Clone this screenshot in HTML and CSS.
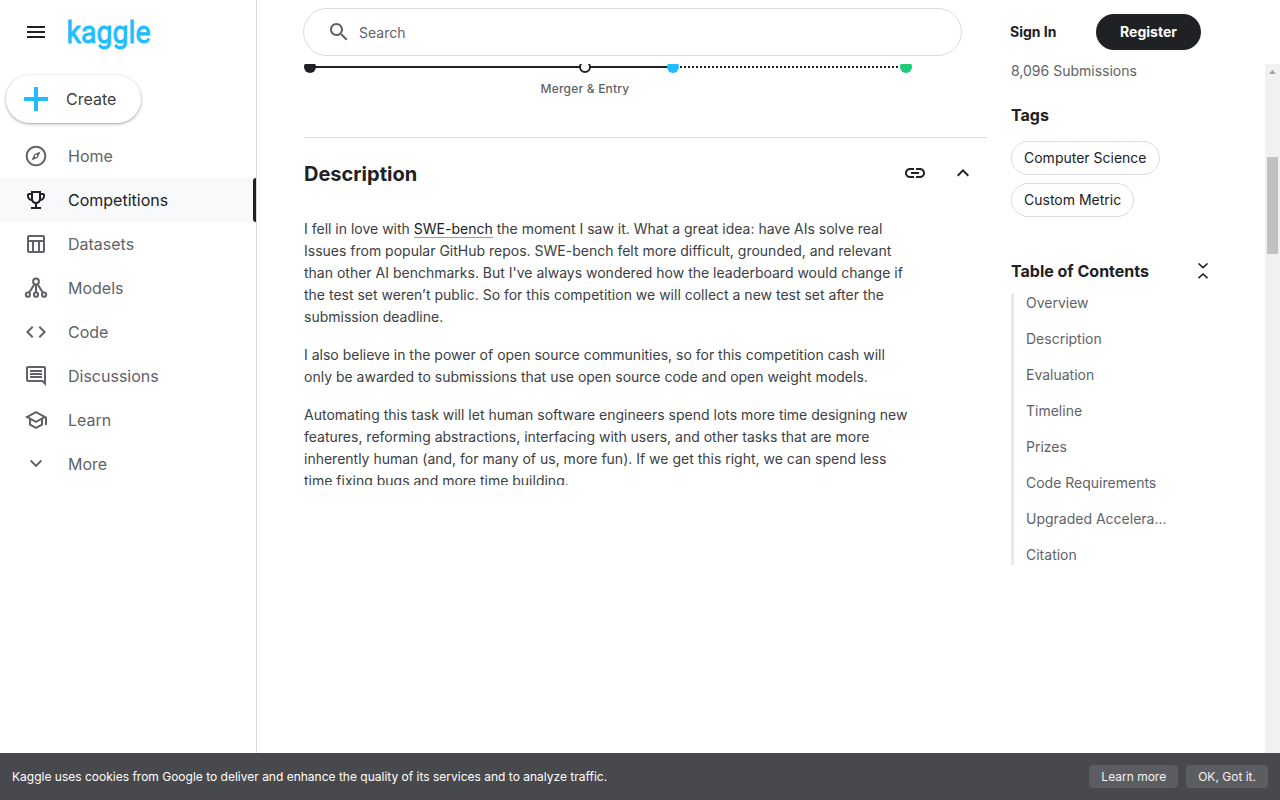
FILE: index.html
```html
<!DOCTYPE html>
<html lang="en">
<head>
<meta charset="utf-8">
<title>Kaggle Competition</title>
<link rel="stylesheet" href="styles.css">
</head>
<body>
<div class="app">
  <aside class="sidebar">
    <div class="brand">
      <svg class="icon" viewBox="0 0 24 24"><path d="M3 18h18v-2H3v2zm0-5h18v-2H3v2zm0-7v2h18V6H3z"/></svg>
      <svg class="logo" viewBox="0 0 86 40"><text x="-.5" y="30.500" textLength="84" lengthAdjust="spacingAndGlyphs">kaggle</text></svg>
    </div>
    <button class="create">
      <svg viewBox="0 0 24 24"><path d="M10 0h4v10h10v4H14v10h-4V14H0v-4h10z"/></svg>
      <span>Create</span>
    </button>
    <nav class="nav">
      <a class="nav-item"><svg class="icon" viewBox="0 0 24 24"><path fill-rule="evenodd" d="M12 1.700C6.300 1.700 1.700 6.300 1.700 12S6.300 22.300 12 22.300 22.300 17.700 22.300 12 17.700 1.700 12 1.700zM12 20.300c-4.580 0-8.300-3.720-8.300-8.300S7.420 3.700 12 3.700s8.300 3.720 8.300 8.300-3.720 8.300-8.300 8.300zM7.500 16.500l6.300-2.700 2.700-6.300-6.300 2.700-2.700 6.300zM12 10.800c.66 0 1.200.54 1.200 1.200s-.54 1.200-1.200 1.200-1.200-.54-1.200-1.200.54-1.200 1.200-1.200z"/></svg>Home</a>
      <a class="nav-item active"><svg class="icon" viewBox="0 0 24 24"><path d="M19 5h-2V3H7v2H5c-1.100 0-2 .9-2 2v1c0 2.550 1.920 4.630 4.390 4.940.63 1.500 1.980 2.630 3.610 2.960V19H7v2h10v-2h-4v-3.100c1.630-.33 2.980-1.460 3.610-2.960C19.080 12.630 21 10.550 21 8V7c0-1.100-.9-2-2-2zM5 8V7h2v3.820C5.840 10.400 5 9.300 5 8zm7 6c-1.650 0-3-1.350-3-3V5h6v6c0 1.650-1.350 3-3 3zm7-6c0 1.300-.84 2.400-2 2.820V7h2v1z"/></svg>Competitions</a>
      <a class="nav-item"><svg class="icon" viewBox="0 0 24 24"><path d="M19 3H5c-1.100 0-2 .9-2 2v14c0 1.100.9 2 2 2h14c1.100 0 2-.9 2-2V5c0-1.100-.9-2-2-2zm0 2v3H5V5h14zm-5 5v9h-4v-9h4zM5 10h3v9H5v-9zm11 9v-9h3v9h-3z"/></svg>Datasets</a>
      <a class="nav-item"><svg class="icon line" viewBox="0 0 24 24"><circle cx="12" cy="5.500" r="2.900"/><circle cx="3.900" cy="18.700" r="2.100"/><circle cx="12" cy="18.700" r="2.100"/><circle cx="20.100" cy="18.700" r="2.100"/><path d="M10.600 8 5 16.900M12 8.400v8.200M13.400 8l5.600 8.900"/></svg>Models</a>
      <a class="nav-item"><svg class="icon" viewBox="0 0 24 24"><path d="M9.400 16.600 4.800 12l4.600-4.600L8 6l-6 6 6 6 1.400-1.400zm5.200 0 4.600-4.600-4.600-4.600L16 6l6 6-6 6-1.400-1.400z"/></svg>Code</a>
      <a class="nav-item"><svg class="icon" viewBox="0 0 24 24"><path d="M21.990 4c0-1.100-.89-2-1.990-2H4c-1.100 0-2 .9-2 2v12c0 1.100.9 2 2 2h14l4 4-.01-18zM20 4v13.170L18.830 16H4V4h16zM6 12h12v2H6zm0-3h12v2H6zm0-3h12v2H6z"/></svg>Discussions</a>
      <a class="nav-item"><svg class="icon" viewBox="0 0 24 24"><path d="M12 3 1 9l4 2.180v6L12 21l7-3.820v-6l2-1.090V17h2V9L12 3zm6.820 6L12 12.720 5.180 9 12 5.280 18.820 9zM17 15.990l-5 2.730-5-2.730v-3.720L12 15l5-2.730v3.720z"/></svg>Learn</a>
      <a class="nav-item"><svg class="icon" viewBox="0 0 24 24"><path d="M7.410 7.840 12 12.420l4.590-4.580L18 9.250l-6 6-6-6z"/></svg>More</a>
    </nav>
  </aside>

  <div class="page">
    <header class="topbar">
      <div class="search">
        <svg class="icon" viewBox="0 0 24 24"><path d="M15.500 14h-.79l-.28-.27C15.410 12.590 16 11.110 16 9.500 16 5.910 13.090 3 9.500 3S3 5.910 3 9.500 5.910 16 9.500 16c1.610 0 3.090-.59 4.230-1.570l.27.28v.79l5 4.990L20.490 19l-4.990-5zm-6 0C7.010 14 5 11.990 5 9.500S7.010 5 9.500 5 14 7.010 14 9.500 11.990 14 9.500 14z"/></svg>
        <span>Search</span>
      </div>
      <a class="sign-in">Sign In</a>
      <button class="register">Register</button>
    </header>

    <div class="viewport">
      <main class="content">
        <section class="timeline">
          <svg class="track" viewBox="0 0 610 10">
            <path class="rail" d="M6 3h363"/>
            <path class="rail dotted" d="M376 3h220"/>
            <circle cx="6" cy="3" r="6" fill="#202124"/>
            <circle class="milestone" cx="281" cy="3" r="5"/>
            <circle cx="369" cy="3" r="6" fill="#20beff"/>
            <circle cx="602" cy="3" r="6" fill="#1ccc77"/>
          </svg>
          <div class="milestone-label">Merger &amp; Entry</div>
        </section>

        <section class="description">
          <div class="section-head">
            <h2>Description</h2>
            <svg class="icon" viewBox="0 0 24 24"><path d="M3.900 12c0-1.710 1.390-3.100 3.100-3.100h4V7H7c-2.760 0-5 2.240-5 5s2.240 5 5 5h4v-1.900H7c-1.710 0-3.100-1.390-3.100-3.100zM8 13h8v-2H8v2zm9-6h-4v1.900h4c1.710 0 3.100 1.390 3.100 3.100s-1.390 3.100-3.100 3.100h-4V17h4c2.760 0 5-2.240 5-5s-2.240-5-5-5z"/></svg>
            <svg class="icon" viewBox="0 0 24 24"><path d="M12 8l-6 6 1.410 1.410L12 10.830l4.590 4.580L18 14z"/></svg>
          </div>
          <div class="prose">
            <p>I fell in love with <a>SWE-bench</a> the moment I saw it. What a great idea: have AIs solve real Issues from popular GitHub repos. SWE-bench felt more difficult, grounded, and relevant than other AI benchmarks. But I've always wondered how the leaderboard would change if the test set weren’t public. So for this competition we will collect a new test set after the submission deadline.</p>
            <p>I also believe in the power of open source communities, so for this competition cash will only be awarded to submissions that use open source code and open weight models.</p>
            <p>Automating this task will let human software engineers spend lots more time designing new features, reforming abstractions, interfacing with users, and other tasks that are more inherently human (and, for many of us, more fun). If we get this right, we can spend less time fixing bugs and more time building.</p>
          </div>
        </section>
      </main>

      <aside class="details">
        <div class="submissions">8,096 Submissions</div>
        <h3>Tags</h3>
        <div class="tags">
          <span class="tag">Computer Science</span>
          <span class="tag">Custom Metric</span>
        </div>
        <div class="toc-head">
          <h3>Table of Contents</h3>
          <svg viewBox="0 0 18 18"><path d="M4.500 1.500 9 5.700l4.500-4.200M4.500 16.200 9 12l4.500 4.200"/></svg>
        </div>
        <ul class="toc">
          <li>Overview</li>
          <li>Description</li>
          <li>Evaluation</li>
          <li>Timeline</li>
          <li>Prizes</li>
          <li>Code Requirements</li>
          <li>Upgraded Accelera...</li>
          <li>Citation</li>
        </ul>
      </aside>

      <div class="scrollbar">
        <svg viewBox="0 0 15 15"><path d="M4 10h7L7.500 6z"/></svg>
        <div class="thumb"></div>
      </div>
    </div>
  </div>
</div>

<footer class="cookies">
  <p>Kaggle uses cookies from Google to deliver and enhance the quality of its services and to analyze traffic.</p>
  <button>Learn more</button>
  <button>OK, Got it.</button>
</footer>
</body>
</html>
```
FILE: styles.css
```css
* { box-sizing: border-box; margin: 0; padding: 0; }
body {
  display: flex;
  flex-direction: column;
  height: 800px;
  overflow: hidden;
  background: #fff;
  color: #202124;
  font-family: Inter, sans-serif;
}
button { border: 0; font: inherit; }
.icon { flex: none; width: 24px; height: 24px; fill: currentColor; }
.app { display: flex; flex: 1; min-height: 0; }

.sidebar { width: 257px; flex: none; border-right: 1px solid #dadce0; }
.brand { display: flex; align-items: center; gap: 19px; height: 64px; padding-left: 24px; }
.logo { width: 86px; height: 40px; overflow: visible; }
.logo text { font: 32px Roboto, sans-serif; fill: #20beff; stroke: #20beff; stroke-width: .9; }
.create {
  display: flex;
  align-items: center;
  gap: 18px;
  width: 135px;
  height: 48px;
  margin: 11px 0 11px 6px;
  padding-left: 18px;
  border-radius: 24px;
  background: #fff;
  box-shadow: 0 1px 3px 1px rgba(60, 64, 67, .15), 0 1px 2px rgba(60, 64, 67, .3);
  color: #3c4043;
  font-size: 16px;
}
.create svg { width: 24px; height: 24px; fill: #20beff; }
.nav-item {
  display: flex;
  align-items: center;
  gap: 20px;
  height: 44px;
  padding-left: 24px;
  color: #5f6368;
  font-size: 16px;
}
.nav-item.active { background: #f8f9fb; color: #202124; }
.nav-item.active::after {
  content: "";
  width: 3px;
  height: 44px;
  margin-left: auto;
  border-radius: 3px 0 0 3px;
  background: #202124;
}
.line { fill: none; stroke: currentColor; stroke-width: 2; }

.page { display: flex; flex-direction: column; flex: 1; min-width: 0; }
.topbar { display: flex; align-items: center; height: 64px; flex: none; padding-left: 46px; }
.search {
  display: flex;
  align-items: center;
  gap: 8px;
  width: 659px;
  height: 48px;
  padding-left: 23px;
  border: 1px solid #dadce0;
  border-radius: 24px;
  color: #5f6368;
  font-size: 14px;
}
.sign-in { width: 86px; margin-left: 48px; padding-bottom: 2px; font-size: 14px; font-weight: 700; }
.register {
  width: 105px;
  height: 36px;
  padding-bottom: 2px;
  border-radius: 18px;
  background: #202124;
  color: #fff;
  font-size: 14px;
  font-weight: 700;
}

.viewport { display: flex; flex: 1; min-height: 0; overflow: hidden; padding-left: 47px; }
.content { width: 683px; flex: none; }
.timeline { height: 74px; border-bottom: 1px solid #dadce0; }
.track { display: block; width: 610px; height: 10px; }
.rail { stroke: #202124; stroke-width: 2; }
.dotted { stroke-dasharray: 2 2; }
.milestone { fill: #fff; stroke: #202124; stroke-width: 2; }
.milestone-label {
  width: 562px;
  padding-top: 6px;
  color: #5f6368;
  font-size: 12px;
  font-weight: 500;
  letter-spacing: .2px;
  line-height: 18px;
  text-align: center;
}
.section-head { display: flex; align-items: center; gap: 24px; height: 71px; padding-right: 12px; }
.section-head h2 { flex: 1; font-size: 20px; font-weight: 700; padding-top: 1px; }
.section-head .icon { margin-bottom: 2px; }
.prose {
  width: 606px;
  height: 276px;
  padding-top: 9px;
  overflow: hidden;
  color: #3c4043;
  font-size: 14px;
  line-height: 22px;
}
.prose p { margin-bottom: 16px; }
.prose a { color: #202124; border-bottom: 1px solid #9aa0a6; }

.details { width: 201px; margin-left: 24px; flex: none; }
.submissions { height: 36px; color: #5f6368; font-size: 14px; line-height: 14px; }
h3 { font-size: 16px; font-weight: 700; line-height: 20px; }
.submissions + h3 { margin-top: 5px; }
.tags { display: flex; flex-direction: column; align-items: flex-start; gap: 8px; margin-top: 16px; }
.tag {
  height: 34px;
  padding: 0 12px;
  border: 1px solid #dadce0;
  border-radius: 17px;
  font-size: 14px;
  line-height: 32px;
}
.toc-head { display: flex; justify-content: space-between; align-items: center; margin-top: 44px; }
.toc-head svg { width: 18px; height: 18px; fill: none; stroke: #202124; stroke-width: 1.6; }
.toc { margin-top: 12px; border-left: 3px solid #e8eaed; list-style: none; }
.toc li { height: 36px; padding-left: 12px; color: #5f6368; font-size: 14px; line-height: 20px; }
.toc li:last-child { height: 20px; }

.scrollbar { width: 15px; margin-left: auto; background: #f1f1f1; }
.scrollbar svg { display: block; width: 15px; height: 15px; fill: #a3a3a3; }
.thumb { width: 11px; height: 97px; margin: 78px 0 0 2px; background: #c1c1c1; }

.cookies {
  display: flex;
  align-items: center;
  gap: 8px;
  height: 47px;
  padding: 0 12px;
  background: #48494d;
  color: #fff;
  font-size: 12px;
}
.cookies p { margin-right: auto; }
.cookies button { height: 23px; padding: 0 12px; border-radius: 4px; background: #5c5d61; color: #f1f3f4; }
```
